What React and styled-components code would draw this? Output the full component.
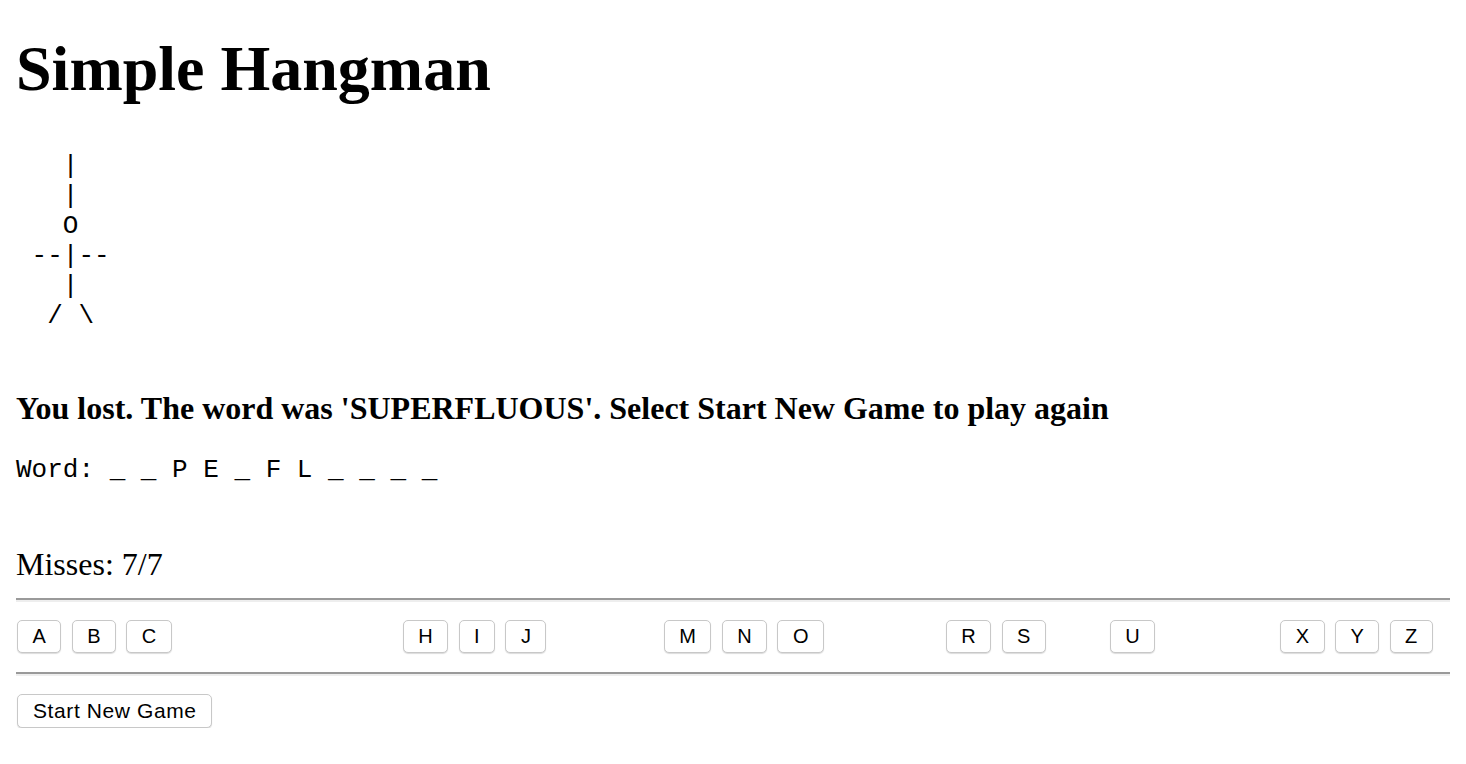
import React from 'react';
import styled, { createGlobalStyle } from 'styled-components';

const GlobalStyle = createGlobalStyle`
  html, body {
    margin: 0;
    padding: 0;
    background: #fff;
  }
  body {
    font-family: "Liberation Serif", "Times New Roman", serif;
    color: #000;
  }
`;

const Page = styled.div`
  padding: 0 16px;
  display: flex;
  flex-direction: column;
  align-items: stretch;
`;

const Title = styled.h1`
  margin: 32px 0 0;
  font: 700 64px/74px "Liberation Serif", "Times New Roman", serif;
`;

const Gallows = styled.pre`
  margin: 45px 0 0;
  font: 26px/30px "Liberation Mono", "Courier New", monospace;
`;

const Status = styled.h4`
  margin: 59px 0 0;
  font: 700 32px/37px "Liberation Serif", "Times New Roman", serif;
`;

const WordLine = styled.div`
  margin-top: 28px;
  font: 26px/30px "Liberation Mono", "Courier New", monospace;
  white-space: pre;
`;

const Misses = styled.div`
  margin-top: 61px;
  font: 32px/37px "Liberation Serif", "Times New Roman", serif;
`;

const Rule = styled.hr`
  margin: ${p => p.$top}px 0 0;
  height: 0;
  border: none;
  border-top: 2px solid #9a9a9a;
  border-bottom: 2px solid #eeeeee;
`;

const LetterRow = styled.div`
  margin-top: 18px;
  padding-left: 1px;
  display: flex;
  gap: 10.3px;
`;

const BaseButton = styled.button`
  box-sizing: border-box;
  height: 33px;
  display: inline-flex;
  align-items: center;
  justify-content: center;
  background: #fff;
  border: 1px solid #c8c8c8;
  border-radius: 5px;
  box-shadow: 0 1px 1px rgba(0, 0, 0, 0.14);
  font: 20px "Liberation Sans", Arial, sans-serif;
  color: #000;
  cursor: pointer;
`;

const LetterButton = styled(BaseButton)`
  padding: 0 14.5px;
  visibility: ${p => (p.$used ? 'hidden' : 'visible')};
`;

const StartButton = styled(BaseButton)`
  align-self: flex-start;
  margin: 18px 0 0 1px;
  height: 34px;
  padding: 0 14px 0 15px;
  font-size: 21px;
  letter-spacing: 0.6px;
`;

const art = `   |
   |
   O
 --|--
   |
  / \\`;

const letters = 'ABCDEFGHIJKLMNOPQRSTUVWXYZ'.split('');
const guessed = new Set('DEFGKLPQTVW'.split(''));
const word = 'SUPERFLUOUS';

export default function App() {
  const shown = word
    .split('')
    .map(c => (guessed.has(c) ? c : '_'))
    .join(' ');

  return (
    <>
      <GlobalStyle />
      <Page>
        <Title>Simple Hangman</Title>
        <Gallows>{art}</Gallows>
        <Status>You lost. The word was '{word}'. Select Start New Game to play again</Status>
        <WordLine>Word: {shown}</WordLine>
        <Misses>Misses: 7/7</Misses>
        <Rule $top={15} />
        <LetterRow>
          {letters.map(l => (
            <LetterButton key={l} $used={guessed.has(l)}>
              {l}
            </LetterButton>
          ))}
        </LetterRow>
        <Rule $top={19} />
        <StartButton>Start New Game</StartButton>
      </Page>
    </>
  );
}
